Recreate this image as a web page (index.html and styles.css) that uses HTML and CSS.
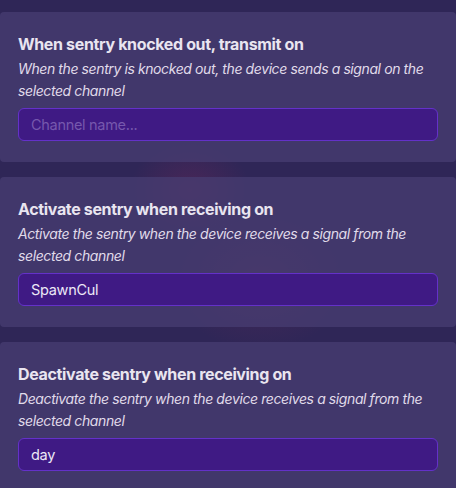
FILE: index.html
```html
<!DOCTYPE html>
<html>
<head>
<meta charset="utf-8">
<link rel="stylesheet" href="styles.css">
</head>
<body>
<div class="list">
  <section class="card">
    <h2 class="title">When sentry knocked out, transmit on</h2>
    <p class="desc">When the sentry is knocked out, the device sends a signal on the selected channel</p>
    <div class="input placeholder">Channel name...</div>
  </section>
  <section class="card">
    <h2 class="title">Activate sentry when receiving on</h2>
    <p class="desc">Activate the sentry when the device receives a signal from the selected channel</p>
    <div class="input">SpawnCul</div>
  </section>
  <section class="card">
    <h2 class="title">Deactivate sentry when receiving on</h2>
    <p class="desc">Deactivate the sentry when the device receives a signal from the selected channel</p>
    <div class="input">day</div>
  </section>
</div>
</body>
</html>
```
FILE: styles.css
```css
html, body {
  margin: 0;
  height: 100%;
}
body {
  background-color: #2f2657;
  background-image:
    radial-gradient(ellipse 60px 50px at 190px 190px, rgba(120, 40, 90, 0.35), transparent),
    radial-gradient(ellipse 90px 70px at 260px 280px, rgba(130, 50, 90, 0.25), transparent);
  font-family: Inter, "Noto Sans", sans-serif;
  overflow: hidden;
}
.list {
  display: flex;
  flex-direction: column;
  gap: 15px;
  padding-top: 12px;
}
.card {
  background: rgba(72, 62, 115, 0.72);
  border-radius: 4px;
  padding: 20px 18px 20px 18px;
  height: 150px;
  box-sizing: border-box;
}
.title {
  margin: 0 0 2px 0;
  font-size: 16px;
  line-height: 24px;
  font-weight: 700;
  letter-spacing: -0.35px;
  color: #e9e5f0;
}
.desc {
  margin: 0 0 6px 0;
  font-size: 14px;
  line-height: 22px;
  font-style: italic;
  letter-spacing: -0.4px;
  color: #e0dbea;
}
.input {
  height: 33px;
  box-sizing: border-box;
  border: 1px solid #6431c9;
  border-radius: 6px;
  background: #3f1a84;
  padding: 0 12px;
  font-size: 14.5px;
  letter-spacing: -0.3px;
  line-height: 31px;
  color: #ece8f6;
}
.input.placeholder {
  color: #7658ad;
}
```
